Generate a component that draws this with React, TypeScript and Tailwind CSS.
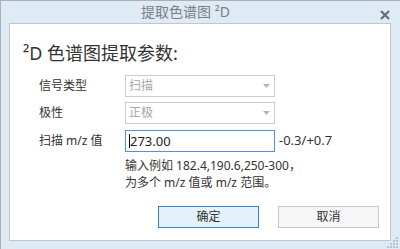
import React from "react";

const font = { fontFamily: '"Noto Sans","Noto Sans CJK SC",sans-serif' };

function Select({ value }: { value: string }) {
  return (
    <div className="w-[150px] h-[22px] border border-[#c9cdd1] bg-white flex items-center justify-between pl-[3px] pr-[4px]">
      <span className="text-[12px] leading-none text-[#a6a6a6]">{value}</span>
      <svg width="7" height="4" viewBox="0 0 7 4">
        <path d="M0 0 H7 L3.5 4 Z" fill="#b5b5b5" />
      </svg>
    </div>
  );
}

export default function App() {
  return (
    <div
      className="relative w-[400px] h-[249px] bg-[#deeaf4] border-l border-t border-[#aab0b6] flex flex-col overflow-hidden"
      style={font}
    >
      <div className="h-[22px] flex items-center justify-center relative pr-[30px]">
        <span className="text-[14px] text-[#7a7f85] leading-none">提取色谱图 ²D</span>
        <svg className="absolute right-[10px] top-[9px]" width="10" height="10" viewBox="0 0 10 10">
          <path d="M1 1 L9 9 M9 1 L1 9" stroke="#6a6d70" strokeWidth="2.2" />
        </svg>
      </div>
      <div className="ml-[8px] mr-[9px] h-[218px] border border-[#c3c7cb] bg-white flex flex-col">
        <div className="pl-[13px] pt-[17px] h-[41px] text-[18px] leading-[24px] text-[#333]">²D 色谱图提取参数:</div>
        <div className="flex flex-col mt-[10px] text-[12px] text-[#333]">
          <div className="flex items-center h-[22px]">
            <span className="w-[115px] shrink-0 whitespace-nowrap pl-[29px]">信号类型</span>
            <Select value="扫描" />
          </div>
          <div className="flex items-center h-[22px] mt-[5px]">
            <span className="w-[115px] shrink-0 whitespace-nowrap pl-[29px]">极性</span>
            <Select value="正极" />
          </div>
          <div className="flex items-center h-[22px] mt-[6px]">
            <span className="w-[115px] shrink-0 whitespace-nowrap pl-[29px]">扫描 m/z 值</span>
            <div className="w-[150px] shrink-0 h-[22px] border border-[#4a95de] flex items-center pl-[3px]">
              <span className="w-px h-[14px] bg-black" />
              <span className="text-[13px] text-[#222] leading-none">273.00</span>
            </div>
            <span className="ml-[4px] text-[13px] text-[#333] whitespace-nowrap">-0.3/+0.7</span>
          </div>
          <div className="ml-[115px] mt-[5px] text-[12px] leading-[17px] text-[#333]">
            <div>输入例如 182.4,190.6,250-300，</div>
            <div>为多个 m/z 值或 m/z 范围。</div>
          </div>
        </div>
        <div className="flex justify-end gap-[19px] pr-[11px] mt-[15px]">
          <button className="w-[101px] h-[22px] border border-[#2f88cf] bg-[#e4f1fa] text-[12px] text-[#333]">确定</button>
          <button className="w-[101px] h-[22px] border border-[#c8c8c8] bg-[#f6f6f6] text-[12px] text-[#333]">取消</button>
        </div>
      </div>
      <svg className="absolute right-[1px] bottom-[1px]" width="12" height="12" viewBox="0 0 12 12">
        {[
          [9, 1],
          [6, 4], [9, 4],
          [3, 7], [6, 7], [9, 7],
          [0, 10], [3, 10], [6, 10], [9, 10],
        ].map(([x, y], i) => (
          <rect key={i} x={x} y={y} width="2" height="2" fill="#b7c2cc" />
        ))}
      </svg>
    </div>
  );
}
